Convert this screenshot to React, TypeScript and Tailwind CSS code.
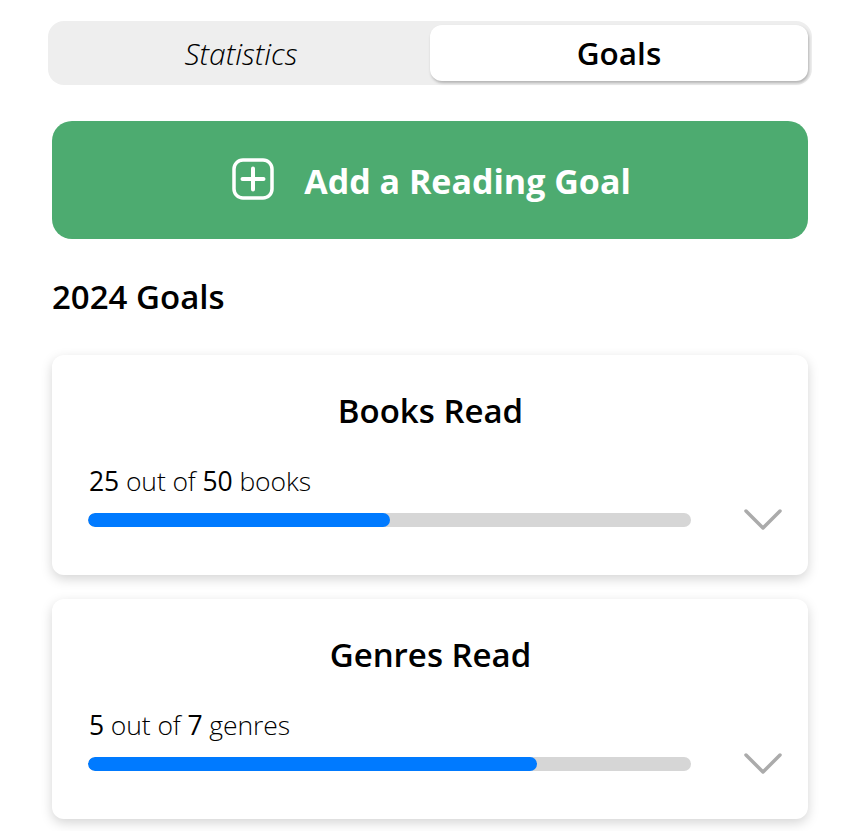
function Goal({ title, done, total, unit, pct }: { title: string; done: number; total: number; unit: string; pct: number }) {
  return (
    <div className="h-[220px] rounded-xl bg-white shadow-[0_4px_12px_rgba(0,0,0,0.17)] pt-[36px] pl-[36px] pr-[26px]">
      <div className="text-center text-[33px] leading-[40px] font-semibold text-black pr-[9px]">{title}</div>
      <div className="mt-[30px] pl-[1px] text-[26.5px] leading-[40px] font-light tracking-[-0.1px] text-black">
        <span className="font-normal">{done}</span> out of <span className="font-normal">{total}</span> {unit}
      </div>
      <div className="mt-[8px] flex items-center justify-between">
        <div className="h-[14px] w-[603px] rounded-full bg-[#d6d6d6] overflow-hidden">
          <div className="h-full rounded-full bg-[#007aff]" style={{ width: `${pct}%` }} />
        </div>
        <svg width="38" height="22" viewBox="0 0 38 22" fill="none" stroke="#ababab" strokeWidth="3.5" strokeLinecap="round" strokeLinejoin="round">
          <path d="M2 2 19 19 36 2" />
        </svg>
      </div>
    </div>
  )
}

export default function App() {
  return (
    <div className="h-[831px] w-[860px] overflow-hidden bg-white pt-[21px] px-[48px] font-['Open_Sans',sans-serif]">
      <div className="flex h-[64px] w-[764px] rounded-2xl bg-[#eeeeee] p-[4px]">
        <div className="flex w-[378px] items-center justify-center text-[30px] font-light italic text-black">Statistics</div>
        <div className="flex flex-1 items-center justify-center rounded-xl bg-white text-[31.5px] font-semibold text-black shadow-[1px_2px_3px_rgba(0,0,0,0.25)]">Goals</div>
      </div>
      <div className="mx-[4px] mt-[36px] flex h-[118px] w-[756px] items-center justify-center gap-[29px] rounded-[20px] bg-[#4dab70] pl-[2px] text-white">
        <svg width="44" height="44" viewBox="0 0 44 44" fill="none" stroke="currentColor" strokeWidth="3.5" strokeLinecap="round" className="-mt-[2px]">
          <rect x="3" y="3" width="38" height="38" rx="9" />
          <path d="M22 11.5v21M11.5 22h21" strokeWidth="4" />
        </svg>
        <span className="pt-[2px] text-[34px] font-bold">Add a Reading Goal</span>
      </div>
      <div className="mx-[4px] mt-[36px] text-[33px] leading-[44px] font-semibold text-black">2024 Goals</div>
      <div className="mx-[4px] mt-[36px] flex w-[756px] flex-col gap-[24px]">
        <Goal title="Books Read" done={25} total={50} unit="books" pct={50} />
        <Goal title="Genres Read" done={5} total={7} unit="genres" pct={74.5} />
      </div>
    </div>
  )
}
